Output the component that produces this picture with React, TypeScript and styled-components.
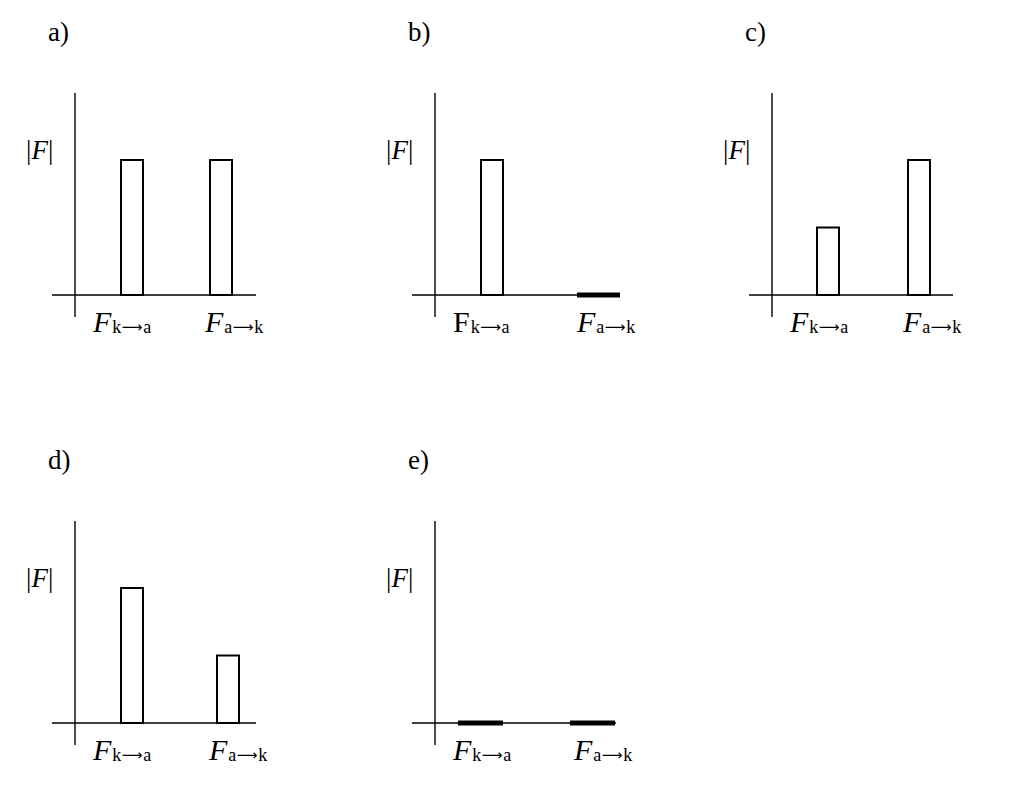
import React from "react";
import styled, { createGlobalStyle } from "styled-components";

const GlobalStyle = createGlobalStyle`
  html, body {
    margin: 0;
    padding: 0;
    background: #ffffff;
  }
  body {
    font-family: "Liberation Serif", "Times New Roman", serif;
    color: #000000;
  }
`;

const Page = styled.div`
  width: 1011px;
  height: 801px;
  display: grid;
  grid-template-columns: 360px 337px 1fr;
  grid-template-rows: 428px 1fr;
  overflow: hidden;
`;

const Panel = styled.div`
  display: flex;
  flex-direction: column;
`;

const Caption = styled.div`
  height: 27px;
  padding: 19px 0 0 48px;
  font-size: 27px;
  line-height: 27px;
`;

const Chart = styled.svg`
  display: block;
  font-family: "Liberation Serif", "Times New Roman", serif;
`;

// panel-local coordinates: the caption takes the first 46px
const TOP = 46;
const W = 330;
const H = 382;
const BASE = 295;
const FULL = 135;

type Bar =
  | { kind: "box"; x: number; h: number }
  | { kind: "flat"; x1: number; x2: number };

interface Label {
  x: number;
  from: string;
  to: string;
  italic: boolean;
}

interface ChartData {
  id: string;
  axisEnd: number;
  bars: Bar[];
  labels: Label[];
}

const charts: ChartData[] = [
  {
    id: "a",
    axisEnd: 256,
    bars: [
      { kind: "box", x: 121, h: FULL },
      { kind: "box", x: 210, h: FULL },
    ],
    labels: [
      { x: 93, from: "k", to: "a", italic: true },
      { x: 205, from: "a", to: "k", italic: true },
    ],
  },
  {
    id: "b",
    axisEnd: 260,
    bars: [
      { kind: "box", x: 121, h: FULL },
      { kind: "flat", x1: 217, x2: 260 },
    ],
    labels: [
      { x: 93, from: "k", to: "a", italic: false },
      { x: 217, from: "a", to: "k", italic: true },
    ],
  },
  {
    id: "c",
    axisEnd: 256,
    bars: [
      { kind: "box", x: 120, h: FULL / 2 },
      { kind: "box", x: 211, h: FULL },
    ],
    labels: [
      { x: 93, from: "k", to: "a", italic: true },
      { x: 206, from: "a", to: "k", italic: true },
    ],
  },
  {
    id: "d",
    axisEnd: 256,
    bars: [
      { kind: "box", x: 121, h: FULL },
      { kind: "box", x: 217, h: FULL / 2 },
    ],
    labels: [
      { x: 93, from: "k", to: "a", italic: true },
      { x: 209, from: "a", to: "k", italic: true },
    ],
  },
  {
    id: "e",
    axisEnd: 256,
    bars: [
      { kind: "flat", x1: 98, x2: 143 },
      { kind: "flat", x1: 210, x2: 255 },
    ],
    labels: [
      { x: 93, from: "k", to: "a", italic: true },
      { x: 214, from: "a", to: "k", italic: true },
    ],
  },
];

const BarShape: React.FC<{ bar: Bar }> = ({ bar }) => {
  if (bar.kind === "flat") {
    return (
      <line
        x1={bar.x1}
        y1={BASE}
        x2={bar.x2}
        y2={BASE}
        stroke="#000"
        strokeWidth={5}
      />
    );
  }
  return (
    <rect
      x={bar.x}
      y={BASE - bar.h}
      width={22}
      height={bar.h}
      fill="#fff"
      stroke="#000"
      strokeWidth={2}
    />
  );
};

const ForceLabel: React.FC<{ label: Label }> = ({ label }) => (
  <text x={label.x} y={332}>
    <tspan fontSize={30} fontStyle={label.italic ? "italic" : "normal"}>
      F
    </tspan>
    <tspan fontSize={18} dx={1} dy={1}>
      {label.from}
    </tspan>
    <tspan
      fontSize={14.5}
      fontFamily="'DejaVu Sans', sans-serif"
      dx={0.5}
      dy={-1.5}
    >
      ⟶
    </tspan>
    <tspan fontSize={18} dx={0.5} dy={1.5}>
      {label.to}
    </tspan>
  </text>
);

const ForceChart: React.FC<{ data: ChartData }> = ({ data }) => (
  <Chart width={W} height={H} viewBox={`0 ${TOP} ${W} ${H}`}>
    <line x1={75} y1={93} x2={75} y2={317} stroke="#000" strokeWidth={1.4} />
    <line
      x1={52}
      y1={BASE}
      x2={data.axisEnd}
      y2={BASE}
      stroke="#000"
      strokeWidth={1.4}
    />
    {data.bars.map((bar, i) => (
      <BarShape key={i} bar={bar} />
    ))}
    <text x={26} y={159} fontSize={27}>
      |<tspan fontStyle="italic">F</tspan>|
    </text>
    {data.labels.map((label, i) => (
      <ForceLabel key={i} label={label} />
    ))}
  </Chart>
);

const App: React.FC = () => (
  <>
    <GlobalStyle />
    <Page>
      {charts.map((c) => (
        <Panel key={c.id}>
          <Caption>{c.id})</Caption>
          <ForceChart data={c} />
        </Panel>
      ))}
    </Page>
  </>
);

export default App;
